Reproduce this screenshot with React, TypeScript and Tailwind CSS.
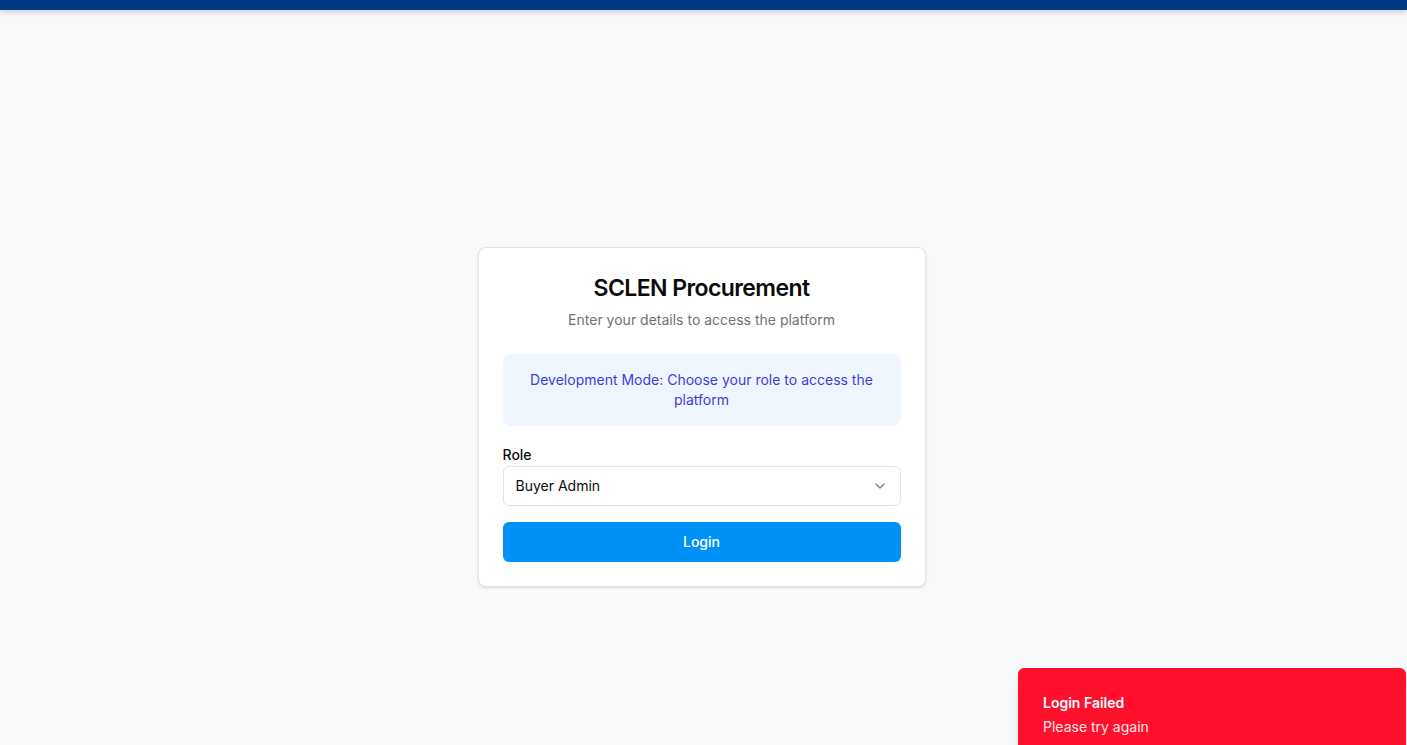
import { ChevronDown } from "lucide-react";

const App = () => {
  return (
    <div className="relative min-h-screen w-full overflow-hidden bg-[#f8f9fb] font-['Inter','Liberation_Sans',sans-serif] text-[#0a0a0a]">
      <div className="h-[10px] w-full bg-[#003a82] shadow-[0_2px_6px_rgba(0,0,0,0.18)]" />

      <div className="flex justify-center pt-[237px] pr-[4px]">
        <div className="w-[448px] rounded-lg border border-[#e4e4e7] bg-white shadow-sm">
          <div className="flex flex-col items-center gap-[10px] px-6 pt-[29px] pb-6">
            <h1 className="text-[23px] leading-none font-semibold tracking-tight">
              SCLEN Procurement
            </h1>
            <p className="text-sm text-[#71717a]">
              Enter your details to access the platform
            </p>
          </div>

          <div className="px-6 pb-6">
            <div className="rounded-lg bg-[#eff6ff] px-4 py-4 text-center text-sm text-[#3b3fd8]">
              Development Mode: Choose your role to access the platform
            </div>

            <div className="mt-[19px] flex flex-col gap-[1px]">
              <label className="text-sm font-medium leading-5">Role</label>
              <button
                type="button"
                className="flex h-10 w-full items-center justify-between rounded-md border border-[#e4e4e7] bg-white px-3 text-sm"
              >
                <span>Buyer Admin</span>
                <ChevronDown className="h-4 w-4 opacity-50" />
              </button>
            </div>

            <button
              type="button"
              className="mt-4 h-10 w-full rounded-md bg-[#0091f7] text-sm font-medium text-white"
            >
              Login
            </button>
          </div>
        </div>
      </div>

      <div className="absolute top-[668px] left-[1018px] w-[388px] rounded-md border border-[#ff112d] bg-[#ff112d] p-6 pr-8 text-white shadow-lg">
        <div className="grid gap-1">
          <div className="text-sm leading-5 font-semibold">Login Failed</div>
          <div className="text-sm leading-5 opacity-90">Please try again</div>
        </div>
      </div>
    </div>
  );
};

export default App;
